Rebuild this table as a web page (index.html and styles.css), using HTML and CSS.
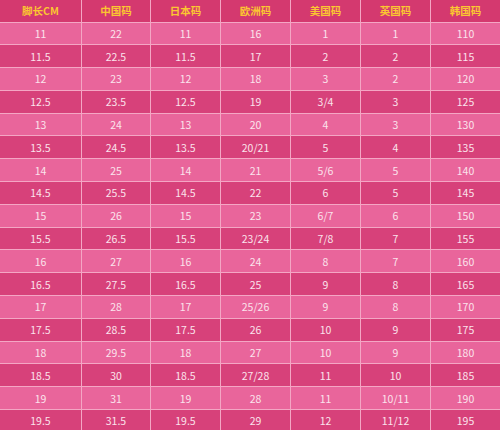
FILE: index.html
```html
<!DOCTYPE html>
<html lang="zh">
<head>
<meta charset="utf-8">
<link rel="stylesheet" href="styles.css">
</head>
<body>
<div class="chart">
  <div class="row head">
    <div>脚长CM</div><div>中国码</div><div>日本码</div><div>欧洲码</div><div>美国码</div><div>英国码</div><div>韩国码</div>
  </div>
  <div class="row light"><div>11</div><div>22</div><div>11</div><div>16</div><div>1</div><div>1</div><div>110</div></div>
  <div class="row dark"><div>11.5</div><div>22.5</div><div>11.5</div><div>17</div><div>2</div><div>2</div><div>115</div></div>
  <div class="row light"><div>12</div><div>23</div><div>12</div><div>18</div><div>3</div><div>2</div><div>120</div></div>
  <div class="row dark"><div>12.5</div><div>23.5</div><div>12.5</div><div>19</div><div>3/4</div><div>3</div><div>125</div></div>
  <div class="row light"><div>13</div><div>24</div><div>13</div><div>20</div><div>4</div><div>3</div><div>130</div></div>
  <div class="row dark"><div>13.5</div><div>24.5</div><div>13.5</div><div>20/21</div><div>5</div><div>4</div><div>135</div></div>
  <div class="row light"><div>14</div><div>25</div><div>14</div><div>21</div><div>5/6</div><div>5</div><div>140</div></div>
  <div class="row dark"><div>14.5</div><div>25.5</div><div>14.5</div><div>22</div><div>6</div><div>5</div><div>145</div></div>
  <div class="row light"><div>15</div><div>26</div><div>15</div><div>23</div><div>6/7</div><div>6</div><div>150</div></div>
  <div class="row dark"><div>15.5</div><div>26.5</div><div>15.5</div><div>23/24</div><div>7/8</div><div>7</div><div>155</div></div>
  <div class="row light"><div>16</div><div>27</div><div>16</div><div>24</div><div>8</div><div>7</div><div>160</div></div>
  <div class="row dark"><div>16.5</div><div>27.5</div><div>16.5</div><div>25</div><div>9</div><div>8</div><div>165</div></div>
  <div class="row light"><div>17</div><div>28</div><div>17</div><div>25/26</div><div>9</div><div>8</div><div>170</div></div>
  <div class="row dark"><div>17.5</div><div>28.5</div><div>17.5</div><div>26</div><div>10</div><div>9</div><div>175</div></div>
  <div class="row light"><div>18</div><div>29.5</div><div>18</div><div>27</div><div>10</div><div>9</div><div>180</div></div>
  <div class="row dark"><div>18.5</div><div>30</div><div>18.5</div><div>27/28</div><div>11</div><div>10</div><div>185</div></div>
  <div class="row light"><div>19</div><div>31</div><div>19</div><div>28</div><div>11</div><div>10/11</div><div>190</div></div>
  <div class="row dark"><div>19.5</div><div>31.5</div><div>19.5</div><div>29</div><div>12</div><div>11/12</div><div>195</div></div>
</div>
</body>
</html>
```
FILE: styles.css
```css
html, body {
  margin: 0;
  padding: 0;
  background: #f4a6c4;
}
body {
  width: 500px;
  height: 430px;
  overflow: hidden;
  font-family: "Noto Sans CJK SC", "Open Sans", sans-serif;
  font-size: 10.5px;
}
.chart {
  display: flex;
  flex-direction: column;
  gap: 1px;
  background: #f4a6c4;
}
.row {
  display: grid;
  grid-template-columns: 81px 68px 69px 69px 69px 69px 69px;
  column-gap: 1px;
  height: 21.8px;
}
.row > div {
  display: flex;
  align-items: center;
  justify-content: center;
  color: #fbe3ec;
}
.head {
  height: 21.5px;
}
.head > div {
  background: #d4396f;
  color: #fbc631;
  font-weight: bold;
}
.light > div {
  background: #e9659b;
}
.dark > div {
  background: #d7417a;
}
```
